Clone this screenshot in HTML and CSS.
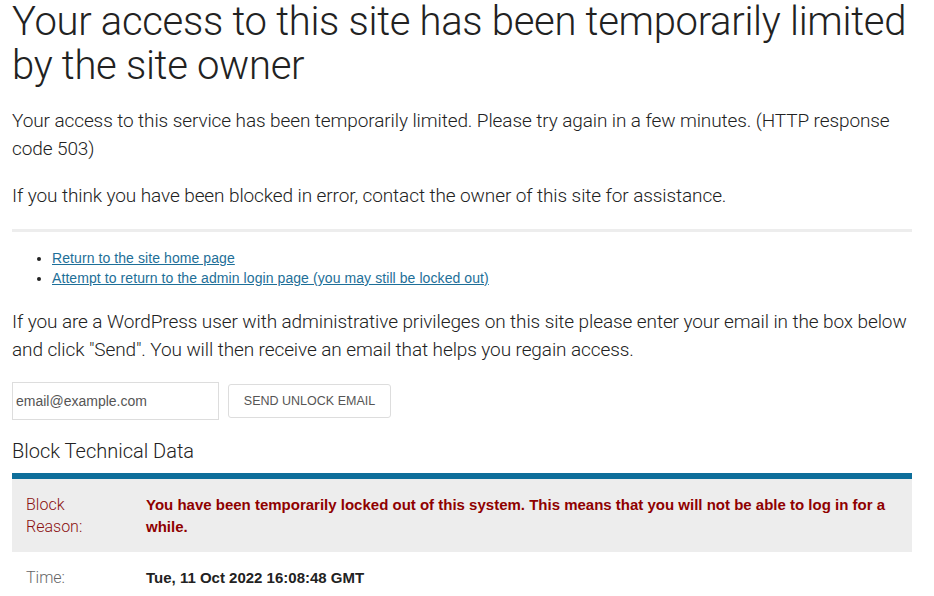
FILE: index.html
```html
<!DOCTYPE html>
<html lang="en">
<head>
<meta charset="utf-8">
<title>Access limited</title>
<link rel="stylesheet" href="styles.css">
</head>
<body>
<div class="page">
  <h1 class="title">Your access to this site has been temporarily limited by the site owner</h1>
  <p class="lead">Your access to this service has been temporarily limited. Please try again in a few minutes. (HTTP response code 503)</p>
  <p class="lead">If you think you have been blocked in error, contact the owner of this site for assistance.</p>
  <div class="rule"></div>
  <ul class="links">
    <li><a href="#">Return to the site home page</a></li>
    <li><a href="#">Attempt to return to the admin login page (you may still be locked out)</a></li>
  </ul>
  <p class="lead lead-form">If you are a WordPress user with administrative privileges on this site please enter your email in the box below and click "Send". You will then receive an email that helps you regain access.</p>
  <form class="unlock">
    <input class="email" type="text" placeholder="email@example.com">
    <button class="send" type="button">Send Unlock Email</button>
  </form>
  <h2 class="subtitle">Block Technical Data</h2>
  <div class="tech">
    <div class="row row-shaded">
      <div class="label label-reason">Block Reason:</div>
      <div class="value value-reason">You have been temporarily locked out of this system. This means that you will not be able to log in for a while.</div>
    </div>
    <div class="row">
      <div class="label">Time:</div>
      <div class="value">Tue, 11 Oct 2022 16:08:48 GMT</div>
    </div>
  </div>
</div>
</body>
</html>
```

FILE: styles.css
```css
html, body {
  margin: 0;
  padding: 0;
  background: #fff;
}

.page {
  width: 900px;
  margin-left: 12px;
  font-family: Roboto, "Liberation Sans", sans-serif;
  font-weight: 300;
  color: #222;
}

.title {
  margin: 0;
  font-size: 40px;
  line-height: 44px;
  font-weight: 300;
  letter-spacing: -0.3px;
  color: #222;
}

.lead {
  margin: 19px 0 0;
  font-size: 19px;
  line-height: 28px;
  letter-spacing: -0.1px;
  color: #222;
}

.rule {
  height: 3px;
  background: #ededed;
  margin-top: 19px;
}

.links {
  margin: 16px 0 0;
  padding-left: 40px;
  font-family: "Liberation Sans", Arial, sans-serif;
  font-weight: 400;
  font-size: 14px;
  line-height: 20px;
  letter-spacing: 0.08px;
  color: #222;
}

.links a {
  color: #1e6f98;
  text-decoration: underline;
}

.lead-form {
  margin-top: 20px;
}

.unlock {
  display: flex;
  align-items: center;
  gap: 9px;
  margin-top: 18px;
}

.email {
  box-sizing: border-box;
  width: 207px;
  height: 38px;
  margin: 0;
  padding: 0 3px;
  border: 1px solid #ddd;
  border-radius: 0;
  font-family: "Liberation Sans", Arial, sans-serif;
  font-size: 14px;
  color: #555;
}

.email::placeholder {
  color: #555;
}

.send {
  box-sizing: border-box;
  width: 163px;
  height: 34px;
  margin: 0;
  padding: 0;
  border: 1px solid #ddd;
  border-radius: 3px;
  background: #fff;
  font-family: "Liberation Sans", Arial, sans-serif;
  font-size: 12.5px;
  text-transform: uppercase;
  color: #555;
}

.subtitle {
  margin: 17px 0 0;
  font-size: 20px;
  line-height: 28px;
  font-weight: 300;
  color: #222;
}

.tech {
  margin-top: 8px;
  border-top: 6px solid #0e6e9a;
}

.row {
  display: flex;
  padding: 15px 14px 14px;
  font-size: 16px;
  line-height: 22px;
}

.row-shaded {
  background: #ededed;
}

.label {
  width: 120px;
  flex: none;
  color: #666;
}

.label-reason {
  width: 80px;
  margin-right: 40px;
  color: #8b0f0f;
}

.value {
  flex: 1;
  font-family: "Liberation Sans", Arial, sans-serif;
  font-size: 15px;
  font-weight: 700;
  color: #222;
}

.value-reason {
  color: #8f0000;
}
```
